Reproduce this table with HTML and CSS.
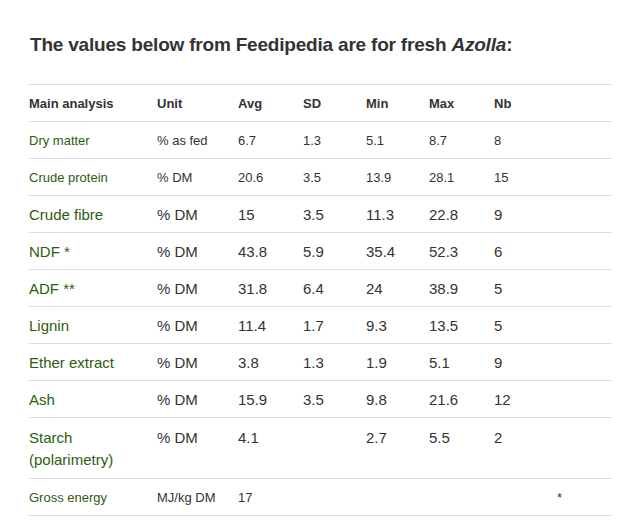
FILE: index.html
```html
<!DOCTYPE html>
<html>
<head>
<meta charset="utf-8">
<link rel="stylesheet" href="styles.css">
</head>
<body>
<div class="page">
  <h2 class="title">The values below from Feedipedia are for fresh <em>Azolla</em>:</h2>
  <table class="data">
    <colgroup>
      <col class="c1"><col class="c2"><col class="c3"><col class="c4"><col class="c5"><col class="c6"><col class="c7"><col class="c8">
    </colgroup>
    <thead>
      <tr class="head"><th>Main analysis</th><th>Unit</th><th>Avg</th><th>SD</th><th>Min</th><th>Max</th><th>Nb</th><th></th></tr>
    </thead>
    <tbody>
      <tr class="small"><td class="lbl">Dry matter</td><td>% as fed</td><td>6.7</td><td>1.3</td><td>5.1</td><td>8.7</td><td>8</td><td></td></tr>
      <tr class="small"><td class="lbl">Crude protein</td><td>% DM</td><td>20.6</td><td>3.5</td><td>13.9</td><td>28.1</td><td>15</td><td></td></tr>
      <tr class="big"><td class="lbl">Crude fibre</td><td>% DM</td><td>15</td><td>3.5</td><td>11.3</td><td>22.8</td><td>9</td><td></td></tr>
      <tr class="big"><td class="lbl">NDF *</td><td>% DM</td><td>43.8</td><td>5.9</td><td>35.4</td><td>52.3</td><td>6</td><td></td></tr>
      <tr class="big"><td class="lbl">ADF **</td><td>% DM</td><td>31.8</td><td>6.4</td><td>24</td><td>38.9</td><td>5</td><td></td></tr>
      <tr class="big"><td class="lbl">Lignin</td><td>% DM</td><td>11.4</td><td>1.7</td><td>9.3</td><td>13.5</td><td>5</td><td></td></tr>
      <tr class="big"><td class="lbl">Ether extract</td><td>% DM</td><td>3.8</td><td>1.3</td><td>1.9</td><td>5.1</td><td>9</td><td></td></tr>
      <tr class="big"><td class="lbl">Ash</td><td>% DM</td><td>15.9</td><td>3.5</td><td>9.8</td><td>21.6</td><td>12</td><td></td></tr>
      <tr class="big tall"><td class="lbl">Starch<br>(polarimetry)</td><td>% DM</td><td>4.1</td><td></td><td>2.7</td><td>5.5</td><td>2</td><td></td></tr>
      <tr class="small"><td class="lbl">Gross energy</td><td>MJ/kg DM</td><td>17</td><td></td><td></td><td></td><td></td><td class="star">*</td></tr>
    </tbody>
  </table>
</div>
</body>
</html>
```

FILE: styles.css
```css
html, body {
  margin: 0;
  padding: 0;
  background: #ffffff;
}

body {
  font-family: "Liberation Sans", Arial, sans-serif;
  color: #333333;
}

.page {
  padding: 34px 11px 0 29px;
}

.title {
  margin: 0 0 28px 1px;
  font-size: 19px;
  letter-spacing: -0.2px;
  line-height: 22px;
  font-weight: bold;
  color: #333333;
}

.title em {
  font-style: italic;
}

.data {
  width: 583px;
  border-collapse: collapse;
  table-layout: fixed;
}

.c1 { width: 128px; }
.c2 { width: 81px; }
.c3 { width: 65px; }
.c4 { width: 63px; }
.c5 { width: 63px; }
.c6 { width: 65px; }
.c7 { width: 63px; }
.c8 { width: 55px; }

.data tr {
  border-top: 1px solid #dddddd;
}

.data tbody tr:last-child {
  border-bottom: 1px solid #dddddd;
}

.data th,
.data td {
  padding: 9px 8px 7px 0;
  line-height: 20px;
  text-align: left;
  vertical-align: top;
  white-space: nowrap;
}

.data th {
  font-size: 13px;
  font-weight: bold;
  color: #333333;
}

.small td {
  font-size: 13px;
}

.big td {
  font-size: 15px;
}

.tall td {
  line-height: 22px;
}

.data td.lbl {
  color: #2e5d0e;
}

.star {
  font-size: 12px;
}
```
